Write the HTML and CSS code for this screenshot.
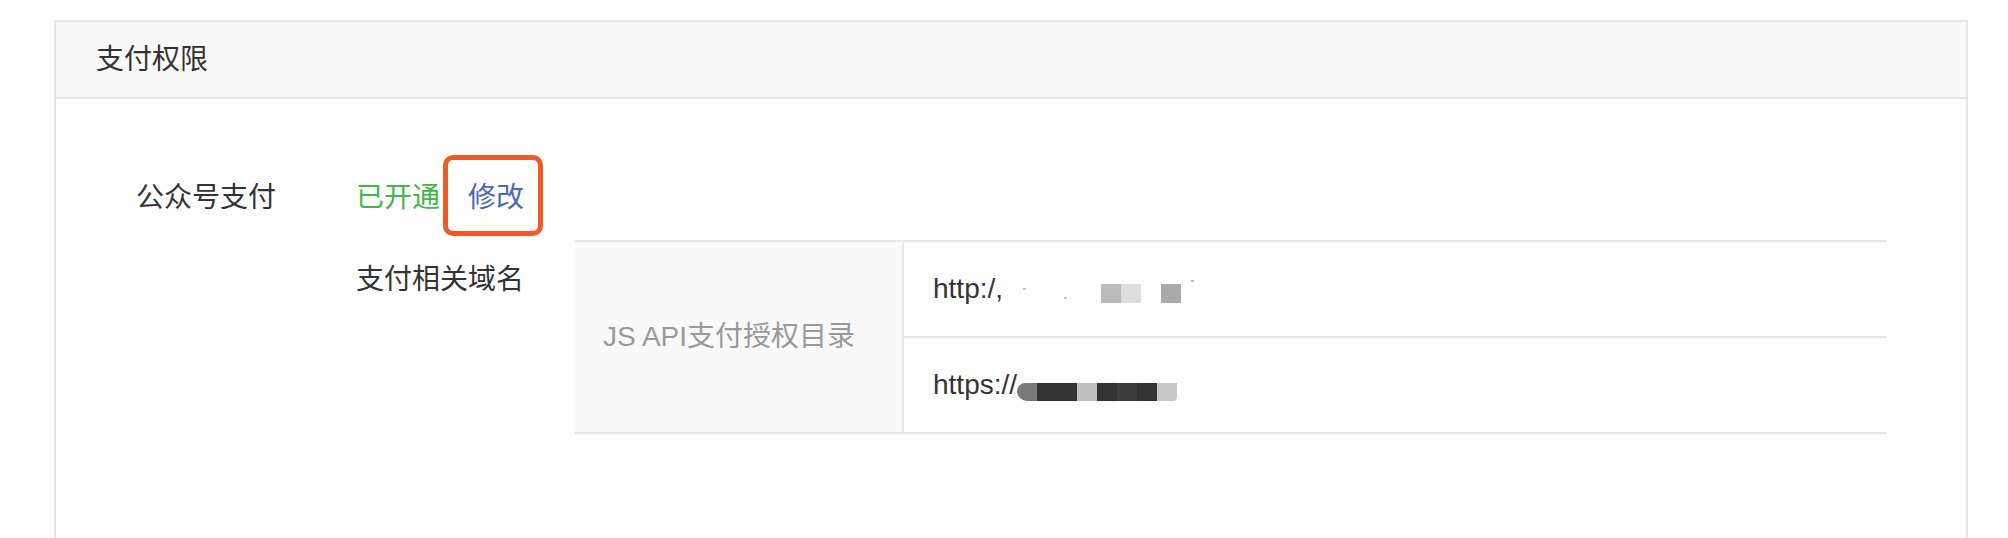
FILE: index.html
```html
<!DOCTYPE html>
<html lang="zh-CN">
<head>
<meta charset="utf-8">
<title>支付权限</title>
<link rel="stylesheet" href="styles.css">
</head>
<body>
<div class="page">
  <section class="card">
    <header class="card-head">支付权限</header>
    <div class="card-body">
      <div class="field">
        <div class="field-label">公众号支付</div>
        <div class="field-value">
          <div class="status-line">
            <span class="status-on">已开通</span>
            <a class="link-edit" href="#">修改</a>
          </div>
          <div class="sub-field">
            <div class="sub-label">支付相关域名</div>
            <div class="domain-table">
              <div class="dt-label">JS API支付授权目录</div>
              <div class="dt-values">
                <div class="dt-row">
                  <span class="url">http:/,</span>
                  <span class="mask mask-one">
                    <i class="dot dot-a"></i><i class="dot dot-b"></i>
                    <i class="sq sq-b"></i><i class="sq sq-d"></i><i class="gap"></i><i class="sq sq-a"></i><i class="dot dot-c"></i>
                  </span>
                </div>
                <div class="dt-row">
                  <span class="url">https://</span>
                  <span class="mask mask-two">
                    <i class="blk blk-mid blk-first"></i><i class="blk blk-dark"></i><i class="blk blk-dark"></i><i class="blk blk-light"></i><i class="blk blk-dark"></i><i class="blk blk-dark2"></i><i class="blk blk-dark"></i><i class="blk blk-light2"></i>
                  </span>
                </div>
              </div>
            </div>
          </div>
        </div>
      </div>
    </div>
  </section>
</div>
</body>
</html>
```

FILE: styles.css
```css
html, body {
  margin: 0;
  padding: 0;
  background: #ffffff;
  overflow: hidden;
}

body {
  font-family: "Liberation Sans", "Noto Sans CJK SC", sans-serif;
  font-size: 28px;
  color: #333333;
}

.page {
  padding: 20px 40px 0 54px;
}

.card {
  border: 2px solid #e7e7e7;
  border-bottom: none;
  background: #fefefe;
  min-height: 560px;
}

.card-head {
  height: 75px;
  background: #f9f9f9;
  border-bottom: 2px solid #e7e7e7;
  padding: 0 40px;
  display: flex;
  align-items: center;
  line-height: 40px;
  color: #333333;
}

.card-body {
  padding: 79px 0 0 80px;
}

.field {
  display: flex;
}

.field-label {
  width: 220px;
  line-height: 40px;
}

.field-value {
  display: flex;
  flex-direction: column;
}

.status-line {
  height: 40px;
  line-height: 40px;
  display: flex;
}

.status-on {
  color: #44b549;
}

.link-edit {
  position: relative;
  margin-left: 28px;
  color: #4a69b0;
  text-decoration: none;
}

.link-edit::after {
  content: "";
  position: absolute;
  top: -23px;
  bottom: -18px;
  left: -25px;
  right: -19px;
  border: 5px solid #ef5a29;
  border-radius: 10px;
}

.sub-field {
  display: flex;
  margin-top: 22px;
}

.sub-label {
  width: 219px;
  padding-top: 20px;
  line-height: 40px;
}

.domain-table {
  width: 1312px;
  display: flex;
  border-top: 2px solid #e7e7e7;
  border-bottom: 2px solid #e7e7e7;
}

.dt-label {
  width: 299px;
  padding-left: 28px;
  background: #f9f9f9;
  border-right: 2px solid #e7e7e7;
  display: flex;
  align-items: center;
  color: #999999;
  line-height: 40px;
}

.dt-values {
  flex: 1;
  display: flex;
  flex-direction: column;
}

.dt-row {
  height: 94px;
  padding-left: 29px;
  display: flex;
  align-items: center;
  line-height: 40px;
  color: #333333;
}

.dt-row + .dt-row {
  border-top: 2px solid #e7e7e7;
}

.mask {
  display: inline-flex;
  align-items: flex-start;
}

.mask i {
  display: block;
  flex: none;
}

.mask-one {
  height: 20px;
  margin-top: 10px;
}

.dot {
  width: 3px;
  height: 2px;
  background: #c8c8c8;
}

.dot-a {
  margin: 4px 0 0 20px;
}

.dot-b {
  margin: 13px 0 0 38px;
}

.sq {
  width: 20px;
  height: 19px;
}

.mask-one .sq-b {
  margin-left: 34px;
}

.sq-b { background: #bbbbbb; }
.sq-d { background: #dddddd; }
.sq-a { background: #aaaaaa; }

.gap {
  width: 20px;
}

.dot-c {
  margin: -4px 0 0 10px;
  background: #bdbdbd;
}

.mask-two {
  margin-top: 14px;
  height: 18px;
}

.blk {
  width: 20px;
  height: 18px;
}

.blk-first {
  border-radius: 10px 0 0 12px;
}

.blk-mid { background: #7a7a7a; }
.blk-dark { background: #333333; }
.blk-dark2 { background: #3e3e3e; }
.blk-light { background: #c0c0c0; }
.blk-light2 { background: #c8c8c8; border-radius: 0 0 4px 0; }
```
